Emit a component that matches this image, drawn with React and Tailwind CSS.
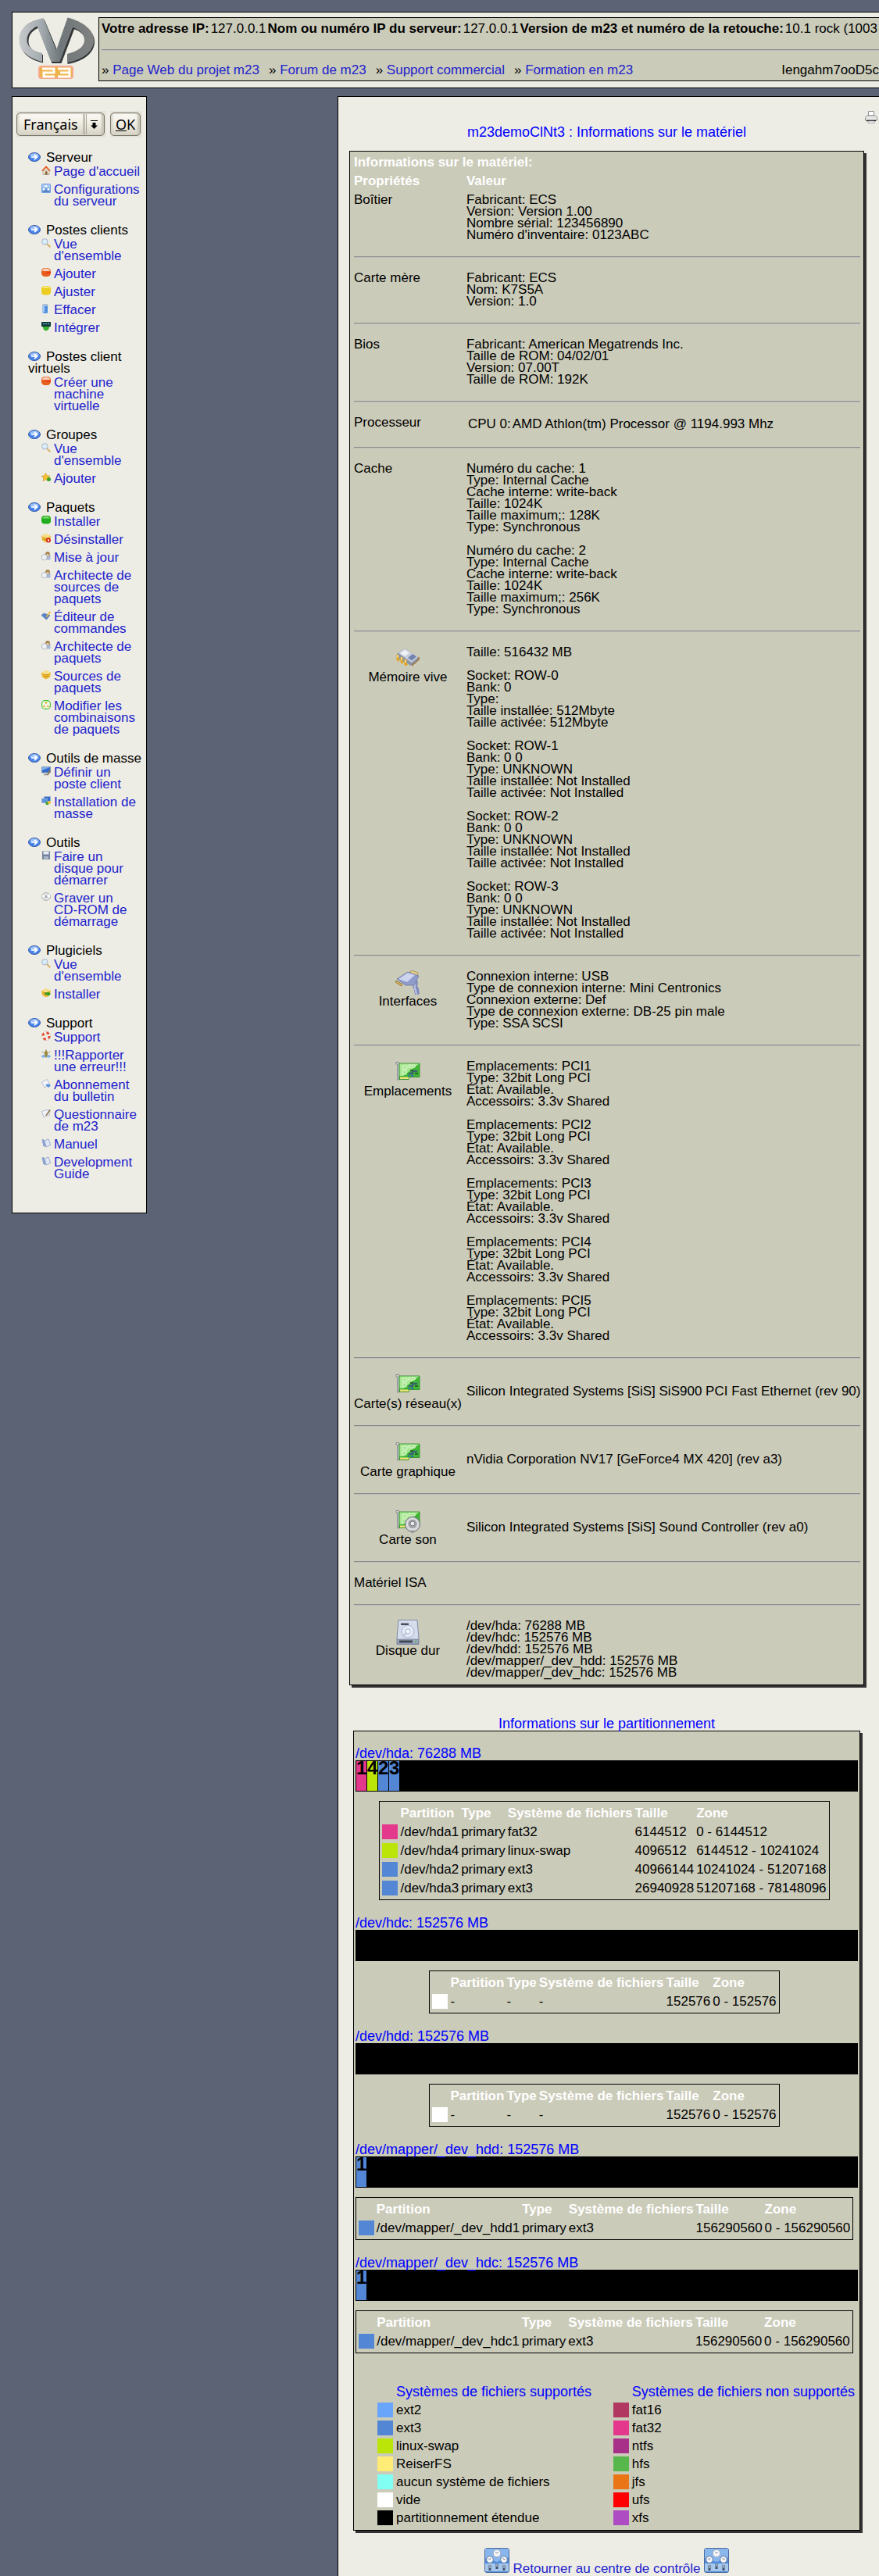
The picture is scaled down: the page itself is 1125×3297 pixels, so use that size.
import React from "react";

/* ---------- data ---------- */

const MENU = [
  {
    title: "Serveur",
    items: [
      ["home", "Page d'accueil"],
      ["gear", "Configurations\ndu serveur"],
    ],
  },
  {
    title: "Postes clients",
    items: [
      ["search", "Vue\nd'ensemble"],
      ["red", "Ajouter"],
      ["yellow", "Ajuster"],
      ["bin", "Effacer"],
      ["robot", "Intégrer"],
    ],
  },
  { title: "Postes client\nvirtuels", items: [["red", "Créer une\nmachine\nvirtuelle"]] },
  {
    title: "Groupes",
    items: [
      ["search", "Vue\nd'ensemble"],
      ["star", "Ajouter"],
    ],
  },
  {
    title: "Paquets",
    items: [
      ["green", "Installer"],
      ["boxRemove", "Désinstaller"],
      ["user", "Mise à jour"],
      ["user", "Architecte de\nsources de\npaquets"],
      ["edit", "Éditeur de\ncommandes"],
      ["user", "Architecte de\npaquets"],
      ["box", "Sources de\npaquets"],
      ["combo", "Modifier les\ncombinaisons\nde paquets"],
    ],
  },
  {
    title: "Outils de masse",
    items: [
      ["screen", "Définir un\nposte client"],
      ["screens", "Installation de\nmasse"],
    ],
  },
  {
    title: "Outils",
    items: [
      ["floppy", "Faire un\ndisque pour\ndémarrer"],
      ["disc", "Graver un\nCD-ROM de\ndémarrage"],
    ],
  },
  {
    title: "Plugiciels",
    items: [
      ["search", "Vue\nd'ensemble"],
      ["boxAdd", "Installer"],
    ],
  },
  {
    title: "Support",
    items: [
      ["buoy", "Support"],
      ["bug", "!!!Rapporter\nune erreur!!!"],
      ["mail", "Abonnement\ndu bulletin"],
      ["note", "Questionnaire\nde m23"],
      ["book", "Manuel"],
      ["book", "Development\nGuide"],
    ],
  },
];

const slot = (n) => `Emplacements: PCI${n}\nType: 32bit Long PCI\nÉtat: Available.\nAccessoirs: 3.3v Shared`;
const bank = (n) =>
  `Socket: ROW-${n}\nBank: 0 0\nType: UNKNOWN\nTaille installée: Not Installed\nTaille activée: Not Installed`;
const cache = (n, max) =>
  `Numéro du cache: ${n}\nType: Internal Cache\nCache interne: write-back\nTaille: 1024K\nTaille maximum;: ${max}K\nType: Synchronous`;

const HARDWARE = [
  { label: "Boîtier", value: "Fabricant: ECS\nVersion: Version 1.00\nNombre sérial: 123456890\nNuméro d'inventaire: 0123ABC" },
  { label: "Carte mère", value: "Fabricant: ECS\nNom: K7S5A\nVersion: 1.0" },
  { label: "Bios", value: "Fabricant: American Megatrends Inc.\nTaille de ROM: 04/02/01\nVersion: 07.00T\nTaille de ROM: 192K" },
  { label: "Processeur", cpu: ["CPU 0:", "AMD Athlon(tm) Processor @ 1194.993 Mhz"] },
  { label: "Cache", value: [cache(1, 128), cache(2, 256)].join("\n\n") },
  {
    label: "Mémoire vive",
    icon: "ram",
    value: [
      "Taille: 516432 MB",
      "Socket: ROW-0\nBank: 0\nType:\nTaille installée: 512Mbyte\nTaille activée: 512Mbyte",
      bank(1),
      bank(2),
      bank(3),
    ].join("\n\n"),
  },
  {
    label: "Interfaces",
    icon: "plug",
    value:
      "Connexion interne: USB\nType de connexion interne: Mini Centronics\nConnexion externe: Def\nType de connexion externe: DB-25 pin male\nType: SSA SCSI",
  },
  { label: "Emplacements", icon: "card", value: [1, 2, 3, 4, 5].map(slot).join("\n\n") },
  { label: "Carte(s) réseau(x)", icon: "card", middle: true, value: "Silicon Integrated Systems [SiS] SiS900 PCI Fast Ethernet (rev 90)" },
  { label: "Carte graphique", icon: "card", middle: true, value: "nVidia Corporation NV17 [GeForce4 MX 420] (rev a3)" },
  { label: "Carte son", icon: "sound", middle: true, value: "Silicon Integrated Systems [SiS] Sound Controller (rev a0)" },
  { label: "Matériel ISA", value: "" },
  {
    label: "Disque dur",
    icon: "disk",
    value:
      "/dev/hda: 76288 MB\n/dev/hdc: 152576 MB\n/dev/hdd: 152576 MB\n/dev/mapper/_dev_hdd: 152576 MB\n/dev/mapper/_dev_hdc: 152576 MB",
  },
];

const EXT3 = "bg-[#5387d5]";
const FAT32 = "bg-[#e4388d]";
const SWAP = "bg-[#bbe408]";

const EMPTY_ROW = [["bg-white", "-", "-", "-", "152576", "0 - 152576"]];
const DISKS = [
  {
    name: "/dev/hda: 76288 MB",
    bar: [["1", FAT32], ["4", SWAP], ["2", EXT3], ["3", EXT3]],
    rows: [
      [FAT32, "/dev/hda1", "primary", "fat32", "6144512", "0 - 6144512"],
      [SWAP, "/dev/hda4", "primary", "linux-swap", "4096512", "6144512 - 10241024"],
      [EXT3, "/dev/hda2", "primary", "ext3", "40966144", "10241024 - 51207168"],
      [EXT3, "/dev/hda3", "primary", "ext3", "26940928", "51207168 - 78148096"],
    ],
  },
  { name: "/dev/hdc: 152576 MB", bar: [], rows: EMPTY_ROW },
  { name: "/dev/hdd: 152576 MB", bar: [], rows: EMPTY_ROW },
  {
    name: "/dev/mapper/_dev_hdd: 152576 MB",
    bar: [["1", EXT3]],
    rows: [[EXT3, "/dev/mapper/_dev_hdd1", "primary", "ext3", "156290560", "0 - 156290560"]],
  },
  {
    name: "/dev/mapper/_dev_hdc: 152576 MB",
    bar: [["1", EXT3]],
    rows: [[EXT3, "/dev/mapper/_dev_hdc1", "primary", "ext3", "156290560", "0 - 156290560"]],
  },
];

const SUPPORTED = [
  ["bg-[#6aa5fc]", "ext2"],
  [EXT3, "ext3"],
  [SWAP, "linux-swap"],
  ["bg-[#ffec77]", "ReiserFS"],
  ["bg-[#80fff2]", "aucun système de fichiers"],
  ["bg-white", "vide"],
  ["bg-black", "partitionnement étendue"],
];
const UNSUPPORTED = [
  ["bg-[#b13861]", "fat16"],
  [FAT32, "fat32"],
  ["bg-[#a93088]", "ntfs"],
  ["bg-[#57b74b]", "hfs"],
  ["bg-[#e97516]", "jfs"],
  ["bg-[#ff0000]", "ufs"],
  ["bg-[#ae4cc4]", "xfs"],
];

/* ---------- small menu icons, 12 x 12 ---------- */

const ball = (dark, light) => (
  <>
    <rect x="0" y="0" width="12" height="11" rx="4.500" fill={dark} />
    <path d="M1 4C1.500 1.500 3.500.6 6 .6S10.500 1.500 11 4z" fill={light} />
  </>
);
const honeyBox = (
  <>
    <path d="M6 .3 12 3 11 8.500 6 11.500 1 8.500 0 3z" fill="#e9b52c" />
    <path d="M6 .3 12 3 6 6 0 3z" fill="#f8e08a" />
    <path d="M3 5.500h6M3.500 7.500h5" stroke="#c9871c" strokeWidth=".8" />
  </>
);
const SMALL = {
  home: (
    <>
      <path d="M2 6h8v5.500H2z" fill="#e8ddc8" stroke="#9b8a70" strokeWidth=".6" />
      <path d="M0 6.500 6 .3l6 6.200-1.300.5L6 3 1.300 7z" fill="#e2561c" />
      <path d="M5 7.500h2.500v4H5z" fill="#7c5a36" />
    </>
  ),
  gear: (
    <>
      <rect width="12" height="12" rx="1.500" fill="#6f9fe3" />
      <path d="M1 1h10v4H1z" fill="#a9c9f4" />
      <circle cx="6" cy="3.500" r="1.600" fill="#fff" />
      <circle cx="3" cy="7" r="1.500" fill="#fff" />
      <circle cx="9" cy="7" r="1.500" fill="#fff" />
      <path d="M3.500 9v2M6 8v3M8.500 9v2" stroke="#44618f" />
    </>
  ),
  search: (
    <>
      <path d="m7 7 4.300 4.300" stroke="#d9b36b" strokeWidth="2" />
      <circle cx="4.300" cy="4.300" r="3.700" fill="#d9ecfa" stroke="#a3b4c6" />
    </>
  ),
  red: (
    <>
      {ball("#e8601e", "#f9cdbb")}
      <path d="M0 6c3 1.500 7-1.500 12-1v1.500H0z" fill="#ef2e12" />
    </>
  ),
  yellow: (
    <>
      <rect width="12" height="11.500" rx="4" fill="#ecce22" />
      <path d="M2.500 1.500h7" stroke="#fbf3b4" strokeWidth="1.500" strokeLinecap="round" />
    </>
  ),
  green: (
    <>
      <rect width="12" height="10.500" rx="4" fill="#22ad1e" />
      <path d="M1.200 3.500C2 1.500 3.500 1 6 1s4 .5 4.800 2.500z" fill="#7fdc6c" />
    </>
  ),
  bin: (
    <>
      <path d="M1.500 1.500h6.500v9.500a3 1 0 0 1-6.500 0z" fill="#4d90e0" />
      <path d="M1.500 2h2.500v9H2z" fill="#a9cdf7" />
      <ellipse cx="4.800" cy="1.500" rx="3.300" ry="1.200" fill="#cfe2f8" stroke="#5d7ba5" strokeWidth=".5" />
    </>
  ),
  robot: (
    <>
      <path d="M0 0h12v6H0z" fill="#123c3c" />
      <path d="M2 2.500h2M5 2.500h2M8 2.500h2" stroke="#79c9e8" />
      <path d="M1.500 6h9l-1.500 4-3 1.500L3 10z" fill="#35b32c" />
    </>
  ),
  star: (
    <>
      <path d="m5.500.3 1.700 3.500 4 .4-3 2.600.9 4-3.600-2.100-3.500 2.100.8-4-2.700-2.600 3.800-.4z" fill="#f6c22e" stroke="#c58516" strokeWidth=".5" />
      <circle cx="9.500" cy="8.500" r="2.500" fill="#37a32c" />
    </>
  ),
  box: honeyBox,
  boxRemove: (
    <>
      {honeyBox}
      <circle cx="9" cy="8.500" r="3" fill="#d92a1c" />
      <path d="M8 7.500h2v2H8z" fill="#fff" />
    </>
  ),
  boxAdd: (
    <>
      {honeyBox}
      <path d="M4 5.500h4V4l4 3-4 3V8.300H5z" fill="#2a9c22" />
    </>
  ),
  user: (
    <>
      <path d="M7 4h4.500v6.500H7z" fill="#a7b8d6" />
      <circle cx="8" cy="3" r="2.900" fill="#a8834f" />
      <circle cx="8" cy="4.200" r="1.500" fill="#ecd2ac" />
      <path d="M.5 5 4 3.500l3 1V10l-3.500 1L.5 9.500z" fill="#eef0f4" stroke="#9fa6b2" strokeWidth=".7" />
    </>
  ),
  edit: (
    <>
      <path d="M0 5.500 3 3l8 2.500L6.500 11z" fill="#5a84ca" stroke="#3c5c96" strokeWidth=".5" />
      <path d="m5.500 7.500 5-7 1.500 1-5 6.500z" fill="#edb63a" />
    </>
  ),
  combo: (
    <>
      <rect x=".6" y=".6" width="10.800" height="10.800" rx="4" fill="#f5f8e8" stroke="#3fc12f" strokeWidth="1.100" />
      <circle cx="6" cy="3.500" r="1.300" fill="#e0ae2a" />
      <circle cx="3.500" cy="8" r="1.300" fill="#e0ae2a" />
      <circle cx="8.500" cy="8" r="1.300" fill="#e0ae2a" />
    </>
  ),
  screen: (
    <>
      <path d="M.5.5h11v7.500H.5z" fill="#2f6ccb" stroke="#8c9db6" />
      <path d="M1 1h10L1 5z" fill="#7fb0ee" />
      <path d="M3 10.500h5" stroke="#8c8c8c" strokeWidth="1.500" />
      <path d="m7 10.500 3.500-6 1.500 1-3.500 6z" fill="#8e7453" />
    </>
  ),
  screens: (
    <>
      <path d="M3.500.5h8v6h-8z" fill="#2f6ccb" stroke="#9fb3d0" strokeWidth=".8" />
      <path d="M.5 3h7v5.500h-7z" fill="#5b95e2" stroke="#9fb3d0" strokeWidth=".8" />
      <circle cx="7.500" cy="9" r="2.200" fill="#3ea232" />
      <circle cx="10" cy="8" r="2" fill="#f0bf34" />
    </>
  ),
  floppy: (
    <>
      <path d="M1 .5h10v10.500H1z" fill="#74839e" />
      <path d="M2.500 1h7v3.500h-7z" fill="#e8edf4" />
      <path d="M3 7h6v3.500H3z" fill="#aab6c9" />
    </>
  ),
  disc: (
    <>
      <ellipse cx="6" cy="5.500" rx="5.500" ry="5" fill="#e0e1e3" stroke="#8f9094" strokeWidth=".6" />
      <path d="M6 5.500 1 3.500v3zM6 5.500l5-3v4z" fill="#fff" />
      <circle cx="6" cy="5.500" r="1.500" fill="#a8a9ac" />
    </>
  ),
  buoy: (
    <>
      <circle cx="6" cy="6" r="4.200" fill="none" stroke="#f3efe9" strokeWidth="3" />
      <circle cx="6" cy="6" r="4.200" fill="none" stroke="#e5482a" strokeWidth="3" strokeDasharray="3.300 3.300" />
      <circle cx="6" cy="6" r="5.700" fill="none" stroke="#c9a79c" strokeWidth=".4" />
    </>
  ),
  bug: (
    <>
      <path d="M.5 3 11.500 9M11.500 3 .5 9M6 0v3" stroke="#8b7b55" strokeWidth=".7" />
      <ellipse cx="6" cy="6" rx="2" ry="4.500" fill="#9b8a3a" />
      <ellipse cx="2.800" cy="9" rx="2.600" ry="1.800" fill="#7fb4ea" />
      <ellipse cx="9.200" cy="9" rx="2.600" ry="1.800" fill="#7fb4ea" />
    </>
  ),
  mail: (
    <>
      <path d="M.5 4 7 .5l4 6L4 11z" fill="#f2f4f8" stroke="#9da7ba" strokeWidth=".7" />
      <path d="M5 7.500 9 6l3 2.500L9 11z" fill="#5c93df" />
    </>
  ),
  note: (
    <>
      <path d="M.5 3.500 9 1l1.500 7L3 11z" fill="#f2f4f8" stroke="#9da7ba" strokeWidth=".7" />
      <path d="m5 8.500 5.500-7.500 1.500 1.200L6.500 9z" fill="#8f7a55" />
    </>
  ),
  book: (
    <>
      <path d="M.5 1.500 3 1l3 8.500-1 1.500-2.500-1z" fill="#8aa1cf" />
      <path d="M4 3 9 .8l2.700 7.700L6 11z" fill="#dfe7f6" stroke="#7f92bd" strokeWidth=".7" />
    </>
  ),
};

function SmallIcon({ name }) {
  return (
    <svg viewBox="0 0 12 12" className="h-3 w-3 shrink-0" aria-hidden="true">
      {SMALL[name]}
    </svg>
  );
}

function Arrow() {
  return (
    <svg viewBox="0 0 16 12" className="mr-[7px] inline-block h-3 w-4 align-baseline" aria-hidden="true">
      <ellipse cx="8" cy="6" rx="7.500" ry="5.500" fill="#4a86ea" stroke="#3a5cab" />
      <ellipse cx="8" cy="4" rx="5.500" ry="2.800" fill="#9cc1f8" />
      <path d="M4 6h6M8 3l3.500 3L8 9" fill="none" stroke="#fff" strokeWidth="1.700" />
    </svg>
  );
}

/* ---------- hardware icons, 32 x 32 ---------- */

const board = (
  <>
    <path d="M1 2.500h3.500V25H2.500V5H1z" fill="#d8d8da" stroke="#77787c" strokeWidth=".8" />
    <path d="M5 4h26v17.500H18l-1 3H5z" fill="#3fb636" stroke="#2b8a26" strokeWidth=".8" />
    <path d="M5.500 4.500h25L10 20H5.500z" fill="#a6e690" />
    <path d="M6 21.500h11v2.500H6z" fill="#f1e27a" />
    <path d="M9 7h6v4H9zM17 6h8v3h-8zM9 13h5v5H9z" fill="none" stroke="#e1f7d4" />
    <path d="M17 17h5v-3h6" fill="none" stroke="#3d5f77" strokeWidth="2.500" />
    <path d="M19 13h4M25 17h4" stroke="#256b22" strokeWidth="2" />
    <path d="M16 20h2M20 20h3" stroke="#2a55d0" strokeWidth="1.500" />
  </>
);
const LARGE = {
  ram: (
    <>
      <path d="m2 10 10-7 17 11v3l-9 8L4 16z" fill="#8b94a8" />
      <path d="m4 9 8-6 17 11-8 7z" fill="#c9cfdc" />
      <path d="m6 9 6-4.500 6 4L12 13z" fill="#eef0f5" />
      <path d="m16 15 6-5 5 3.500-6 5z" fill="#7184ae" />
      <path d="M3 11v6l2 1.500M8 14v6l2 1.500M13 17v6l2 1.500" fill="none" stroke="#e2a41d" strokeWidth="3" />
      <path d="M3 11v4M8 14v4M13 17v4" stroke="#fbe38c" strokeWidth="1.500" />
      <path d="m21 25 9-8v-3" fill="none" stroke="#9b6b35" strokeWidth="1.500" />
    </>
  ),
  plug: (
    <>
      <path d="m20 0 9 3-1 5-9-4z" fill="#ead28e" stroke="#8b6f2f" strokeWidth=".6" />
      <path d="M24 13c5 3-2 6 3 11l1 7" fill="none" stroke="#7f8bbb" strokeWidth="6" />
      <path d="M24 14c4 3-2 6 2 11l1 6" fill="none" stroke="#b9c3e6" strokeWidth="2" />
      <path d="m2 11 14-9 14 5-6 12-11 0z" fill="#8f9bca" stroke="#7079a0" strokeWidth=".8" />
      <path d="m4 11 12-8 9 3-10 9z" fill="#cdd4ee" />
      <path d="m1 13 8 5-1.500 2L0 15z" fill="#e2b653" stroke="#5d4a1c" strokeWidth=".6" />
    </>
  ),
  card: board,
  sound: (
    <>
      {board}
      <circle cx="22" cy="20" r="9.500" fill="#d4d5d8" stroke="#696a70" />
      <circle cx="22" cy="19.500" r="6.500" fill="#a4a5aa" stroke="#f1f1f3" />
      <circle cx="22" cy="19" r="3" fill="#e9eaec" stroke="#77787d" />
      <path d="m18 28 4 3.500 4-3.500z" fill="#909196" />
    </>
  ),
  disk: (
    <>
      <path d="M4 .5h24l2 23.500v7.500H2V24z" fill="#d5dcec" stroke="#7f8aa5" />
      <path d="M2.500 25h27v6h-27z" fill="#9aa7bd" stroke="#68738d" strokeWidth=".6" />
      <circle cx="16" cy="15" r="8" fill="#e3e8f5" stroke="#a9b4d0" />
      <circle cx="16" cy="15" r="3" fill="#f6f8fc" stroke="#a9b4d0" />
      <path d="M7 4.500h10v2.500H7z" fill="#4b4f5b" />
      <path d="M5 26.500h17v3H5z" fill="#3f4654" />
      <path d="M25 27h2v2h-2z" fill="#57b74b" />
      <path d="m9 21 6-4" stroke="#b6bfd6" strokeWidth="2" />
    </>
  ),
};

function LargeIcon({ name }) {
  return (
    <svg viewBox="0 0 32 32" className="mx-auto block h-8 w-8" aria-hidden="true">
      {LARGE[name]}
    </svg>
  );
}

function ControlIcon() {
  return (
    <svg viewBox="0 0 32 32" className="inline-block h-8 w-8 align-baseline" aria-hidden="true">
      <rect x=".5" y=".5" width="31" height="31" rx="2.500" fill="#4f8edf" stroke="#4c6c9f" />
      <path d="M1 1h30v11L16 18 1 13z" fill="#8ab6ee" />
      <path d="M1 20h30v10H1z" fill="#a5c7ec" />
      <circle cx="16" cy="7" r="4.800" fill="#f3f5f8" stroke="#9ba9bd" />
      <circle cx="7" cy="15" r="4.300" fill="#f3f5f8" stroke="#6d7f9a" />
      <circle cx="25" cy="15" r="4.300" fill="#f3f5f8" stroke="#6d7f9a" />
      <path d="m14 5 2 2 2-2M5 14l2 1 1-2M24 13l1 2 2-1" fill="none" stroke="#8a8f98" />
      <path d="M7 22v7M16 20v7M25 22v7" stroke="#41516b" strokeWidth="3" />
      <path d="M7 22v4M16 20v4M25 22v4" stroke="#c9d6e6" strokeWidth="1.200" />
    </svg>
  );
}

function Printer() {
  return (
    <svg viewBox="0 0 16 16" className="h-4 w-4" aria-hidden="true">
      <path d="M4.500.5h7V6h-7z" fill="#fff" stroke="#8b8d95" />
      <path d="M2.500 6h11l2 2.500V12H.5V8.500z" fill="#e6e7e6" stroke="#8d908d" />
      <path d="M2 12.500h12" stroke="#111" strokeWidth="1.300" />
      <path d="M4 13h8v2.500H4z" fill="#f5f5f5" stroke="#8b8d95" strokeWidth=".7" />
    </svg>
  );
}

function Logo() {
  return (
    <svg viewBox="0 0 98 80" className="h-20 w-[98px]" role="img" aria-label="m23">
      <defs>
        <linearGradient id="steel" x1="0" x2="1">
          <stop offset="0" stopColor="#c6c9cc" />
          <stop offset=".3" stopColor="#a3abae" />
          <stop offset=".55" stopColor="#70777a" />
          <stop offset="1" stopColor="#7f817f" />
        </linearGradient>
      </defs>
      <path
        d="M24 4C8 8 3 18 3 31c0 13 10 23 29 27.500V48C20 45 13.500 39 13.500 31c0-8 4-13 12-17zM34 3.500 50.500 43 64.500 2.500C86 8 98 19 98 31c0 14-12 25-34.500 29V49C78 45 86 39 86 31c0-8-6-13-14-15.500L55.500 59h-12L24 9z"
        fill="#333638"
      />
      <path
        d="M29 2C9 7 1.500 17 1.500 29.500 1.500 42 12 52 31 57V46C18 43 11.500 37 11.500 29.500c0-8 5-14 13-18L42.500 57h11L70 13c9 3 15 8.500 15 16.500 0 8-8 14-22 17.500V58c22-4 34-15 34-28.500C97 17 85 6 63.500.5L49 42 32.500 1z"
        fill="url(#steel)"
      />
      <rect x="26" y="62" width="45" height="17" rx="4" fill="#f6a98a" />
      <rect x="28" y="64" width="41" height="13" rx="3" fill="#efb34c" />
      <path d="M31 66h15v5H33v5h14M51 66h15v10H51M54 71h12" fill="none" stroke="#fffdf6" strokeWidth="3" />
    </svg>
  );
}

/* ---------- shared pieces ---------- */

function Link({ children, className = "" }) {
  return (
    <a href="#" className={`text-[#2222cc] ${className}`}>
      {children}
    </a>
  );
}

function Rule() {
  return <hr className="h-0.5 border-0 border-t border-b border-t-[#8c8c8c] border-b-[#bcbcbc]" />;
}

function Swatch({ color }) {
  return <span className={`block h-[19px] w-5 ${color}`} />;
}

/* ---------- page parts ---------- */

function Header() {
  const links = ["Page Web du projet m23", "Forum de m23", "Support commercial", "Formation en m23"];
  return (
    <header className="ml-[15px] flex border-y border-l border-black bg-[#eeede5] pt-1.5 pb-2">
      <div className="w-[110px] shrink-0 pl-[7px]">
        <Logo />
      </div>
      <div className="min-w-0 flex-1 border-y border-l border-black bg-[#cbcbb9] pt-[5px] pb-[3px] pl-[3px] whitespace-nowrap">
        <p className="flex h-[19px] gap-0.5 pt-px">
          <b>Votre adresse IP:</b>
          <span>127.0.0.1</span>
          <b>Nom ou numéro IP du serveur:</b>
          <span>127.0.0.1</span>
          <b>Version de m23 et numéro de la retouche:</b>
          <span>10.1 rock (1003</span>
        </p>
        <div className="pt-4 pb-4">
          <Rule />
        </div>
        <div className="flex h-[19px] justify-between pt-px">
          <nav className="flex gap-3">
            {links.map((l) => (
              <span key={l}>
                » <Link>{l}</Link>
              </span>
            ))}
          </nav>
          <span>Iengahm7ooD5c</span>
        </div>
      </div>
    </header>
  );
}

function Language() {
  const face =
    "border border-[#77756a] bg-linear-to-b from-[#fbfaf6] via-[#eeebe1] to-[#d5d2c4] shadow-[inset_2px_0_2px_#d8d5c8,inset_-3px_0_2px_#c9c6b8]";
  return (
    <form
      className="flex gap-[5px] pl-[5px] font-['Noto_Sans','DejaVu_Sans',sans-serif]"
      onSubmit={(e) => e.preventDefault()}
    >
      <div className="relative w-[115px] bg-[#e8e3da] py-0.5 pr-0.5">
        <select
          aria-label="Langue"
          className={`block h-[30px] w-full appearance-none rounded-[5px] pl-2 text-[18px] leading-7 text-black ${face}`}
        >
          <option>Français</option>
        </select>
        <svg viewBox="0 0 28 28" className="pointer-events-none absolute top-[3px] right-1 h-7 w-7" aria-hidden="true">
          <path d="M2.500 1v26M4.500 1v26M6.500 1v26" stroke="#aaa797" />
          <path d="M12 9.500h9" stroke="#000" />
          <path d="M14.500 12h4v3.500H21L16.500 20 12 15.500h2.500z" fill="#000" />
        </svg>
      </div>
      <div className="bg-[#e8e3da] py-0.5 pr-0.5">
        <button className={`block h-[30px] w-[39px] rounded-[5px] text-[18px] leading-7 ${face}`}>
          <u>O</u>K
        </button>
      </div>
    </form>
  );
}

function Sidebar() {
  return (
    <aside className="w-[173px] shrink-0 self-start border border-black bg-[#eeede5] pt-[18px] pb-[42px] whitespace-pre">
      <Language />
      <nav className="flex flex-col gap-[22px] pt-[18px] pl-5">
        {MENU.map((g) => (
          <section key={g.title}>
            <h2>
              <Arrow />
              {g.title}
            </h2>
            <ul className="flex flex-col gap-2 pt-[3px] pl-[17px]">
              {g.items.map(([icon, label]) => (
                <li key={label} className="flex gap-1">
                  <SmallIcon name={icon} />
                  <Link>{label}</Link>
                </li>
              ))}
            </ul>
          </section>
        ))}
      </nav>
    </aside>
  );
}

function Hardware() {
  return (
    <div className="border border-black bg-[#cbcbb9] px-[5px] pt-1.5 pb-2 shadow-[3px_3px_0_#323232]">
      <table className="w-full border-collapse text-left whitespace-pre">
        <thead className="text-white">
          <tr>
            <th colSpan={2} className="p-0 pb-[9px]">
              Informations sur le matériel:
            </th>
          </tr>
          <tr>
            <th className="w-36 p-0 pb-[9px]">Propriétés</th>
            <th className="p-0 pb-[9px]">Valeur</th>
          </tr>
        </thead>
        <tbody>
          {HARDWARE.map((row, i) => (
            <React.Fragment key={row.label}>
              {i > 0 && (
                <tr>
                  <td colSpan={2} className="pt-5 pb-[18px]">
                    <Rule />
                  </td>
                </tr>
              )}
              <tr>
                <td className={row.icon ? "pr-1.5 text-center align-top" : "align-top"}>
                  {row.icon && <LargeIcon name={row.icon} />}
                  {row.label}
                </td>
                <td className={row.middle ? "align-middle" : "align-top"}>
                  {row.cpu ? (
                    <span className="flex gap-0.5 px-0.5 py-0.5">
                      <span>{row.cpu[0]}</span>
                      <span>{row.cpu[1]}</span>
                    </span>
                  ) : (
                    row.value
                  )}
                </td>
              </tr>
            </React.Fragment>
          ))}
        </tbody>
      </table>
    </div>
  );
}

function Disk({ disk }) {
  return (
    <section>
      <h3 className="text-[18px] leading-[18px] text-[#0000ff]">{disk.name}</h3>
      <div className="flex h-10 gap-px border border-black bg-black">
        {disk.bar.map(([n, color]) => (
          <span key={n} className={`w-[13px] text-center text-2xl leading-[18px] font-bold ${color}`}>
            {n}
          </span>
        ))}
      </div>
      <div className="mr-1.5 flex justify-center pt-3 pb-5">
        <table className="border-separate border-spacing-x-[3px] border-spacing-y-[5px] border border-black text-left whitespace-nowrap">
          <thead>
            <tr className="h-[19px] text-white">
              <td className="p-0" />
              {["Partition", "Type", "Système de fichiers", "Taille", "Zone"].map((h) => (
                <th key={h} className="p-0">
                  {h}
                </th>
              ))}
            </tr>
          </thead>
          <tbody>
            {disk.rows.map(([color, ...cells]) => (
              <tr key={cells[0]} className="h-[19px]">
                <td className="p-0">
                  <Swatch color={color} />
                </td>
                {cells.map((c, i) => (
                  <td key={i} className="p-0">
                    {c}
                  </td>
                ))}
              </tr>
            ))}
          </tbody>
        </table>
      </div>
    </section>
  );
}

function Legend({ title, entries }) {
  return (
    <div>
      <h3 className="pl-6 text-[18px] leading-[18px] text-[#0000ff]">{title}</h3>
      <ul className="flex flex-col gap-1 pt-[5px]">
        {entries.map(([color, name]) => (
          <li key={name} className="flex items-center gap-1">
            <Swatch color={color} />
            {name}
          </li>
        ))}
      </ul>
    </div>
  );
}

function Content() {
  return (
    <main className="ml-[244px] min-w-0 flex-1 border-t border-l border-black bg-[#eeede5] pt-[18px] pr-[19px] pl-3.5">
      <div className="-mr-[17px] flex justify-end">
        <a href="#" aria-label="Imprimer">
          <Printer />
        </a>
      </div>
      <h1 className="pt-px pb-3.5 text-center text-[18px] leading-5 text-[#0000ff]">
        m23demoClNt3 : Informations sur le matériel
      </h1>
      <Hardware />
      <div className="mx-[5px] pt-10">
        <h2 className="text-center text-[18px] leading-[18px] text-[#0000ff]">Informations sur le partitionnement</h2>
        <div className="border border-black bg-[#cbcbb9] px-0.5 pt-[19px] pb-1.5 shadow-[3px_3px_0_#323232]">
          {DISKS.map((d) => (
            <Disk key={d.name} disk={d} />
          ))}
          <div className="flex justify-between pt-5 pr-1 pl-7 whitespace-nowrap">
            <Legend title="Systèmes de fichiers supportés" entries={SUPPORTED} />
            <Legend title="Systèmes de fichiers non supportés" entries={UNSUPPORTED} />
          </div>
        </div>
      </div>
      <p className="flex justify-center pt-[22px]">
        <Link className="flex items-baseline gap-1">
          <ControlIcon />
          <span>Retourner au centre de contrôle</span>
          <ControlIcon />
        </Link>
      </p>
    </main>
  );
}

export default function App() {
  return (
    <div className="flex min-h-screen flex-col overflow-hidden bg-[#5b6375] pt-[15px] font-['Liberation_Sans',Arial,sans-serif] text-[17px] leading-[15px] text-black">
      <Header />
      <div className="flex flex-1 pt-2.5 pl-[15px]">
        <Sidebar />
        <Content />
      </div>
    </div>
  );
}
